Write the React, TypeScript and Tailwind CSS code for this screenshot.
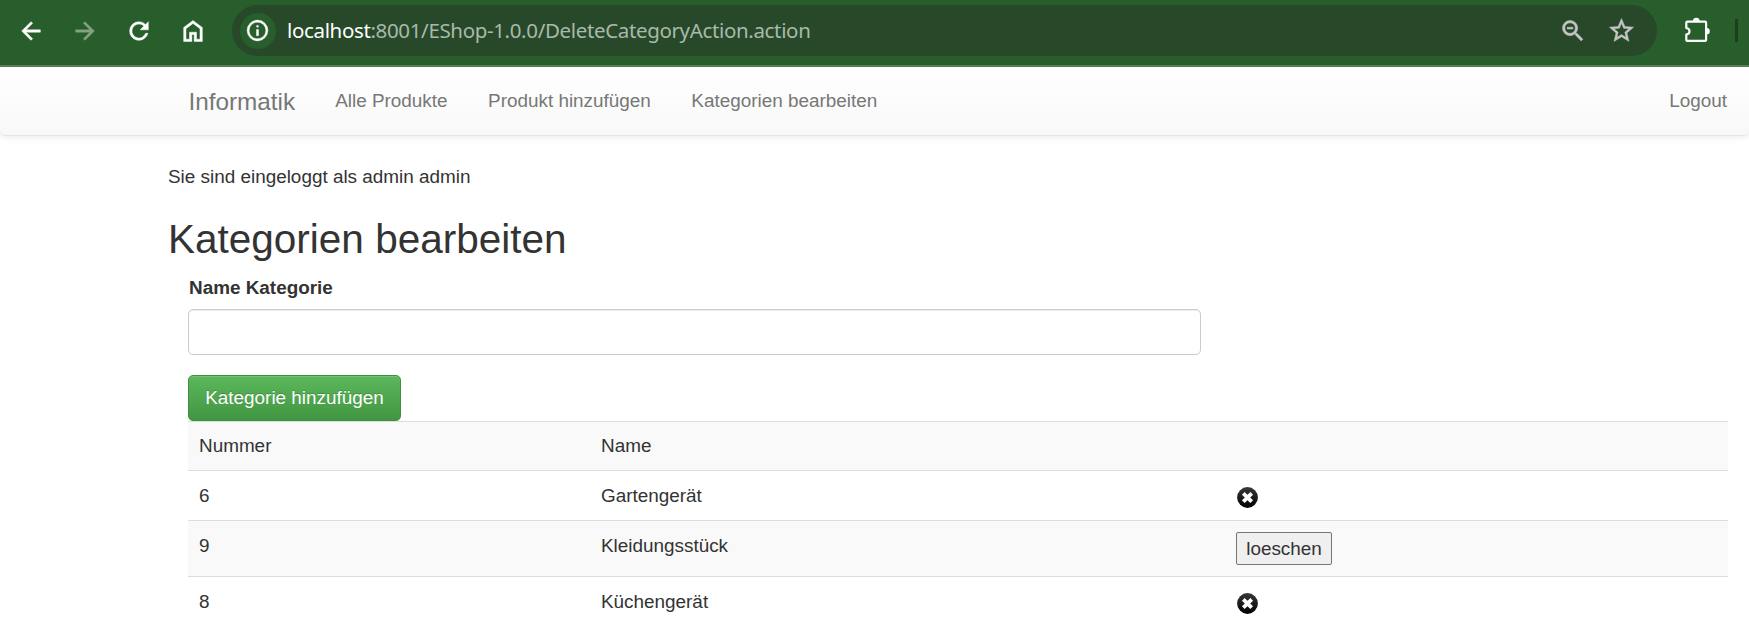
import type { ReactNode } from "react";

const navItems = ["Alle Produkte", "Produkt hinzufügen", "Kategorien bearbeiten"];

function DeleteIcon() {
  return (
    <svg className="mt-[5px] ml-px block h-[21px] w-[21px]" viewBox="0 0 21 21">
      <defs>
        <linearGradient id="disc" x1="0" y1="0" x2="0" y2="1">
          <stop offset="0" stopColor="#383838" />
          <stop offset="1" stopColor="#000" />
        </linearGradient>
      </defs>
      <circle cx="10.5" cy="10.5" r="10.4" fill="url(#disc)" />
      <path d="M6.3 6.3l8.400 8.400M14.700 6.300l-8.400 8.400" stroke="#fff" strokeWidth="3.800" />
    </svg>
  );
}

function Glyph({ children, className }: { children: ReactNode; className: string }) {
  return (
    <svg viewBox="0 0 24 24" fill="currentColor" stroke="currentColor" strokeWidth="0.4" className={className}>
      {children}
    </svg>
  );
}

function BrowserBar() {
  return (
    <div className="flex h-[67px] items-start border-b-2 border-[#548256] bg-[#285e2b] pt-[5px] text-white">
      <div className="flex h-[51px] w-[232px] shrink-0 items-center">
        <Glyph className="ml-[17px] h-[28px] w-[28px]">
          <path d="M20 11H7.8l5.6-5.6L12 4l-8 8 8 8 1.4-1.4L7.8 13H20z" />
        </Glyph>
        <Glyph className="ml-[26px] h-[28px] w-[28px] text-[#84a385]">
          <path d="M12 4l-1.4 1.4 5.6 5.6H4v2h12.200l-5.600 5.600L12 20l8-8z" />
        </Glyph>
        <Glyph className="ml-[26px] h-[28px] w-[28px]">
          <path d="M17.650 6.350A7.950 7.950 0 0 0 12 4a8 8 0 1 0 7.700 10h-2.080A6 6 0 1 1 12 6c1.660 0 3.140.69 4.220 1.780L13 11h7V4z" />
        </Glyph>
        <Glyph className="ml-[26px] h-[28px] w-[28px]">
          <path d="M6 19h3v-6h6v6h3v-9l-6-4.500L6 10zM4 21V9l8-6 8 6v12h-7v-6h-2v6z" />
        </Glyph>
      </div>
      <div className="flex h-[51px] w-[1425px] shrink-0 items-center rounded-full bg-[#27492a]">
        <div className="ml-[8px] flex h-[36px] w-[36px] items-center justify-center rounded-full bg-[#285e2b]">
          <Glyph className="mr-px h-[25px] w-[25px]">
            <path d="M11 17h2v-6h-2zm1-8a1 1 0 1 0 0-2 1 1 0 0 0 0 2zm0 13a10 10 0 1 1 0-20 10 10 0 0 1 0 20zm0-2a8 8 0 1 0 0-16 8 8 0 0 0 0 16z" />
          </Glyph>
        </div>
        <div className="ml-[11px] flex-1 whitespace-nowrap font-['Noto_Sans',sans-serif] text-[20.500px] tracking-[-0.350px] text-[#a9b9aa]">
          <span className="text-white">localhost</span>:8001/EShop-1.0.0/DeleteCategoryAction.action
        </div>
        <Glyph className="mr-[20px] h-[28px] w-[28px] text-[#c4c4c4]">
          <path d="M15.500 14h-.79l-.28-.27A6.500 6.500 0 1 0 13.730 14.430l.27.28v.79l5 4.990L20.490 19zm-6 0a4.500 4.500 0 1 1 0-9 4.500 4.500 0 0 1 0 9zM7 8.700h5v1.600H7z" />
        </Glyph>
        <Glyph className="mr-[21px] h-[29px] w-[29px] text-[#c4c4c4]">
          <path d="M22 9.240l-7.190-.62L12 2 9.190 8.630 2 9.240l5.460 4.730L5.820 21 12 17.270 18.180 21l-1.630-7.030zM12 15.400l-3.760 2.270 1-4.280-3.320-2.880 4.380-.38L12 6.100l1.710 4.040 4.380.38-3.320 2.880 1 4.280z" />
        </Glyph>
      </div>
      <div className="flex h-[51px] flex-1 items-center">
        <svg viewBox="0 0 28 28" className="mb-[2px] ml-[27px] h-[28px] w-[28px]">
          <path d="M3.300 5.700h17.800q1 0 1 1v17.200q0 1-1 1H3.300q-1 0-1-1v-5.300c2.200-.4 3.200-1.700 3.200-3.300s-1-2.900-3.200-3.300V6.700q0-1 1-1z" fill="none" stroke="#fff" strokeWidth="2.200" strokeLinejoin="round" />
          <path d="M9 5a3.300 3.300 0 0 1 6.600 0zM22.500 12a3.300 3.300 0 0 1 0 6.600z" fill="#fff" />
        </svg>
        <div className="ml-[23px] h-[23px] w-[3px] bg-[#1b3f1d]" />
      </div>
    </div>
  );
}

function Navbar() {
  return (
    <nav className="flex h-[69px] items-start rounded-b-[5px] border-b border-[#e4e4e4] bg-linear-to-b from-white to-[#f8f8f8] pr-[22px] pl-[188.500px] text-[#777] shadow-[0_1px_7px_rgba(0,0,0,0.09)]">
      <span className="pt-[21px] text-[24.300px] leading-[27px]">Informatik</span>
      <div className="ml-[40px] flex gap-[40.500px] pt-[20px]">
        {navItems.map((item) => (
          <a key={item}>{item}</a>
        ))}
      </div>
      <a className="ml-auto pt-[20px]">Logout</a>
    </nav>
  );
}

function Row({ id, name, height, striped, action }: { id: string; name: string; height: string; striped?: boolean; action?: ReactNode }) {
  return (
    <div className={`grid grid-cols-[402px_635px_1fr] border-t border-[#ddd] px-[11px] ${height} ${striped ? "bg-[#f9f9f9]" : "bg-white"}`}>
      <span>{id}</span>
      <span>{name}</span>
      <div>{action}</div>
    </div>
  );
}

export default function App() {
  return (
    <div className="h-[639px] overflow-hidden bg-white font-['Liberation_Sans',Arial,sans-serif] text-[18.900px] leading-[27px] text-[#333]">
      <BrowserBar />
      <Navbar />
      <main className="pr-[21px] pl-[168px]">
        <p className="pt-[27px]">Sie sind eingeloggt als admin admin</p>
        <h1 className="mt-[27px] text-[40.500px] leading-[45px] font-medium">Kategorien bearbeiten</h1>
        <div className="pl-[20px]">
          <label htmlFor="category" className="mt-[12px] block pl-px font-bold">Name Kategorie</label>
          <input
            id="category"
            className="mt-[8px] block h-[46px] w-[1013px] rounded-[5px] border border-[#ccc] bg-white px-4 shadow-[inset_0_1px_1px_rgba(0,0,0,0.075)] outline-none"
          />
          <button className="mt-[20px] block h-[46px] w-[213px] rounded-[5px] border border-[#3e8f3e] bg-linear-to-b from-[#5cb85c] to-[#419641] pb-[2px] text-white shadow-[inset_0_1px_0_rgba(255,255,255,0.15),0_1px_1px_rgba(0,0,0,0.075)] [text-shadow:0_-1px_0_rgba(0,0,0,0.2)]">
            Kategorie hinzufügen
          </button>
          <Row id="Nummer" name="Name" height="h-[49px] pt-[10px]" striped />
          <Row id="6" name="Gartengerät" height="h-[50px] pt-[11px]" action={<DeleteIcon />} />
          <Row
            id="9"
            name="Kleidungsstück"
            height="h-[56px] pt-[11px]"
            striped
            action={
              <button className="block h-[33px] w-[96px] rounded-[2px] border border-[#767676] bg-[#efefef] leading-[29px]">loeschen</button>
            }
          />
          <Row id="8" name="Küchengerät" height="h-[60px] pt-[11px]" action={<DeleteIcon />} />
        </div>
      </main>
    </div>
  );
}
